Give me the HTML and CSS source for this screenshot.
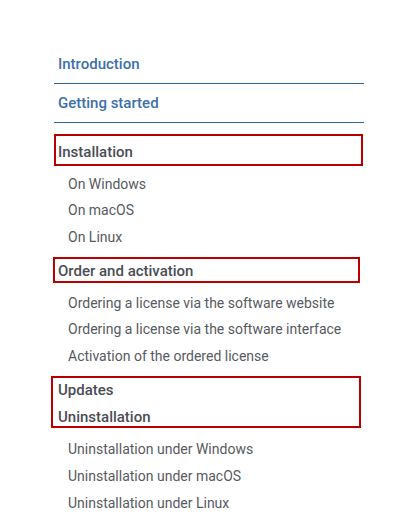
FILE: index.html
```html
<!DOCTYPE html>
<html lang="en">
<head>
    <meta charset="UTF-8">
    <meta name="viewport" content="width=device-width, initial-scale=1.0">
    <title>Documentation</title>
    <link rel="stylesheet" href="styles.css">
</head>
<body>
    <div class="page">
        <nav class="nav">
            <a class="top-link" href="#">Introduction</a>
            <a class="top-link" href="#">Getting started</a>

            <div class="section first">
                <div class="section-title">Installation</div>
                <ul class="sub-list">
                    <li>On Windows</li>
                    <li>On macOS</li>
                    <li>On Linux</li>
                </ul>
            </div>

            <div class="section">
                <div class="section-title">Order and activation</div>
                <ul class="sub-list">
                    <li>Ordering a license via the software website</li>
                    <li>Ordering a license via the software interface</li>
                    <li>Activation of the ordered license</li>
                </ul>
            </div>

            <div class="section">
                <div class="section-title">Updates</div>
                <div class="section-title">Uninstallation</div>
                <ul class="sub-list">
                    <li>Uninstallation under Windows</li>
                    <li>Uninstallation under macOS</li>
                    <li>Uninstallation under Linux</li>
                </ul>
            </div>

            <!-- annotation frames drawn over the menu -->
            <div class="mark mark-install"></div>
            <div class="mark mark-order"></div>
            <div class="mark mark-updates"></div>
        </nav>
    </div>
</body>
</html>
```

FILE: styles.css
```css
body {
    font-family: Roboto, "Liberation Sans", Arial, sans-serif;
    margin: 0;
    padding: 0;
    background-color: #fff;
    color: #4a4d55;
}
.page {
    padding: 45px 0 0 54px;
}
.nav {
    position: relative;
    width: 310px;
}
.top-link {
    display: block;
    padding: 9px 4px;
    line-height: 20px;
    font-size: 15px;
    font-weight: 500;
    color: #3b6fae;
    text-decoration: none;
    border-bottom: 1px solid #2e66a3;
}
.section.first {
    margin-top: 15.5px;
}
.section-title {
    padding-left: 4px;
    font-size: 15px;
    font-weight: 500;
    line-height: 27.7px;
    color: #4a4d55;
}
.sub-list {
    list-style: none;
    margin: 0;
    padding: 4.5px 0 6.8px 14px;
}
.sub-list li {
    font-size: 14px;
    line-height: 26.67px;
    color: #575a61;
}
.mark {
    position: absolute;
    box-sizing: border-box;
    border: 2px solid #b80000;
}
.mark-install {
    left: 0;
    top: 89px;
    width: 309px;
    height: 32px;
}
.mark-order {
    left: -1px;
    top: 212px;
    width: 307px;
    height: 26px;
}
.mark-updates {
    left: -3px;
    top: 331px;
    width: 310px;
    height: 52px;
}
```
